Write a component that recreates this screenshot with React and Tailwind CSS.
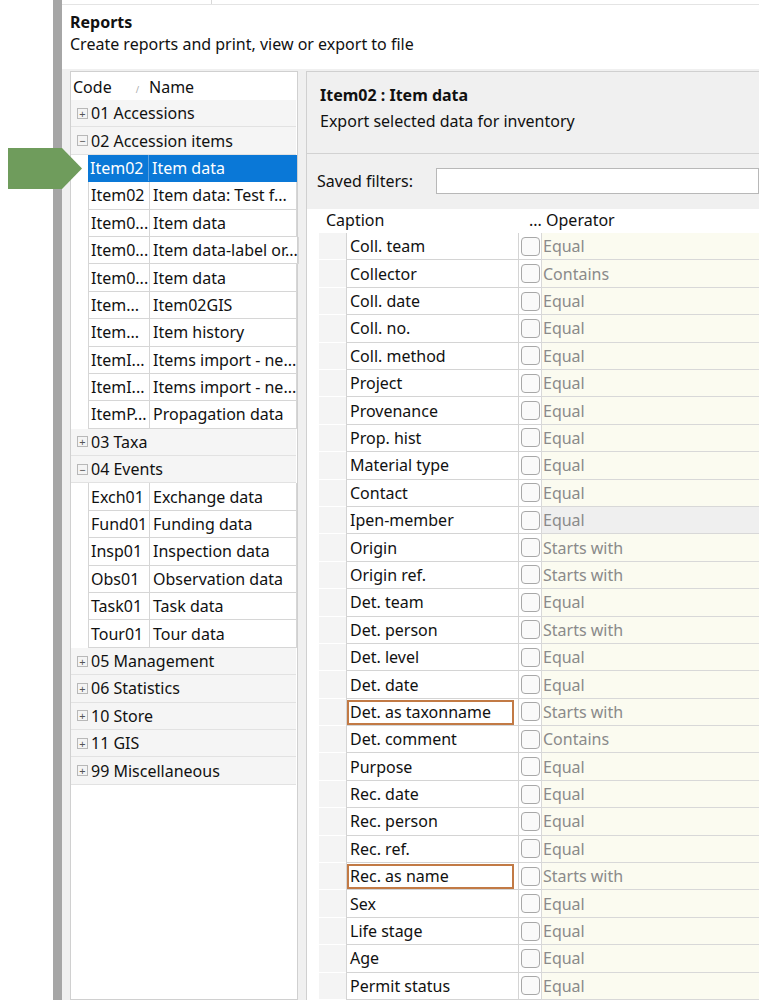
import React from 'react'

const tree = [
  { g: '01 Accessions', open: false },
  { g: '02 Accession items', open: true, items: [
    ['Item02', 'Item data', true],
    ['Item02', 'Item data: Test f...'],
    ['Item0...', 'Item data'],
    ['Item0...', 'Item data-label or...'],
    ['Item0...', 'Item data'],
    ['Item...', 'Item02GIS'],
    ['Item...', 'Item history'],
    ['ItemI...', 'Items import - ne...'],
    ['ItemI...', 'Items import - ne...'],
    ['ItemP...', 'Propagation data'],
  ] },
  { g: '03 Taxa', open: false },
  { g: '04 Events', open: true, items: [
    ['Exch01', 'Exchange data'],
    ['Fund01', 'Funding data'],
    ['Insp01', 'Inspection data'],
    ['Obs01', 'Observation data'],
    ['Task01', 'Task data'],
    ['Tour01', 'Tour data'],
  ] },
  { g: '05 Management' },
  { g: '06 Statistics' },
  { g: '10 Store' },
  { g: '11 GIS' },
  { g: '99 Miscellaneous' },
]

const fields = [
  ['Coll. team', 'Equal'], ['Collector', 'Contains'], ['Coll. date', 'Equal'], ['Coll. no.', 'Equal'],
  ['Coll. method', 'Equal'], ['Project', 'Equal'], ['Provenance', 'Equal'], ['Prop. hist', 'Equal'],
  ['Material type', 'Equal'], ['Contact', 'Equal'], ['Ipen-member', 'Equal', 'gray'], ['Origin', 'Starts with'],
  ['Origin ref.', 'Starts with'], ['Det. team', 'Equal'], ['Det. person', 'Starts with'], ['Det. level', 'Equal'],
  ['Det. date', 'Equal'], ['Det. as taxonname', 'Starts with', 'mark'], ['Det. comment', 'Contains'], ['Purpose', 'Equal'],
  ['Rec. date', 'Equal'], ['Rec. person', 'Equal'], ['Rec. ref.', 'Equal'], ['Rec. as name', 'Starts with', 'mark'],
  ['Sex', 'Equal'], ['Life stage', 'Equal'], ['Age', 'Equal'], ['Permit status', 'Equal'],
]

function Box({ open }) {
  return (
    <span className="w-[11px] h-[11px] border border-[#b8b8b8] bg-[#f4f4f4] flex items-center justify-center text-[#555] text-[11px] leading-none mr-[3px]">
      {open ? '−' : '+'}
    </span>
  )
}

export default function App() {
  return (
    <div className="relative w-[759px] h-[1000px] overflow-hidden bg-white text-[#111] text-[16px]" style={{ fontFamily: '"Noto Sans", "Open Sans", sans-serif' }}>
      {/* green arrow */}
      <svg className="absolute left-[8px] top-[148px]" width="74" height="41" viewBox="0 0 74 41">
        <polygon points="0,0 54,0 74,20.5 54,41 0,41" fill="#6f9c5c" />
      </svg>
      <div className="flex h-full">
        <div className="w-[53px] shrink-0" />
        <div className="w-[9px] shrink-0 bg-[#a6a6a6]" />
        <div className="flex-1 flex flex-col bg-[#f0f0f0]">
          <div className="h-[5px] bg-white border-b border-[#e4e4e4] flex">
            <div className="w-[150px] border-r border-[#d8d8d8]" />
          </div>
          <div className="bg-white pl-[8px] pt-[6px] pb-[14px] leading-[22px]">
            <div className="font-bold">Reports</div>
            <div>Create reports and print, view or export to file</div>
          </div>
          <div className="flex flex-1 pl-[8px] pt-[2px] gap-[8px] min-h-0">
            {/* left tree */}
            <div className="w-[228px] shrink-0 bg-white border border-[#d0d0d0] pt-[1px] leading-none">
              <div className="h-[27px] flex items-center">
                <span className="pl-[2px] w-[78px]">Code <span className="text-[9px] text-[#aaa] ml-[20px]">/</span></span>
                <span>Name</span>
              </div>
              {tree.map((n) => (
                <React.Fragment key={n.g}>
                  <div className="h-[27.4px] flex items-center pl-[6px] bg-[#f5f5f5] border-b border-[#e2e2e2] mr-[1px]">
                    <Box open={n.open} />
                    {n.g}
                  </div>
                  {n.items && n.items.map(([c, t, sel], i) => (
                    <div key={i} className="h-[27.4px] flex pl-[17px]">
                      <div className={`flex flex-1 border-b ${sel ? 'bg-[#0a78d7] text-white border-[#0a78d7]' : 'border-[#d6d6d6] border-l'} border-r`}>
                        <span className={`w-[61px] pl-[2px] flex items-center border-r ${sel ? 'border-[#5aa0e0]' : 'border-[#d6d6d6]'}`}>{c}</span>
                        <span className="pl-[3px] flex items-center whitespace-nowrap">{t}</span>
                      </div>
                    </div>
                  ))}
                </React.Fragment>
              ))}
            </div>
            {/* right panel */}
            <div className="flex-1 flex flex-col border-l border-t border-[#d0d0d0] min-w-0">
              <div className="h-[83px] border-b border-[#d2d2d2] pl-[13px] pt-[10px] leading-[26px]">
                <div className="font-bold">Item02 : Item data</div>
                <div>Export selected data for inventory</div>
              </div>
              <div className="h-[56px] flex items-center pl-[10px]">
                <span className="w-[119px]">Saved filters:</span>
                <div className="flex-1 h-[26px] bg-white border border-[#b8b8b8]" />
              </div>
              <div className="bg-white flex-1 pl-[12px]">
                <div className="h-[24px] flex items-end pb-[1px]">
                  <span className="w-[206px] pl-[7px]">Caption</span>
                  <span className="pl-[4px]">... Operator</span>
                </div>
                {fields.map(([c, o, k]) => (
                  <div key={c} className="h-[27.4px] flex">
                    <div className="w-[27px] bg-[#f4f4f4] border-b border-white" />
                    <div className="w-[173px] relative flex items-center pl-[3px] border-l border-r border-b border-[#d4d4d4] whitespace-nowrap">
                      {c}
                      {k === 'mark' && <div className="absolute left-[0px] top-[1px] w-[167px] h-[25px] border-2 border-[#c27a45]" />}
                    </div>
                    <div className="w-[22px] flex items-center justify-center border-b border-[#d4d4d4]">
                      <span className="w-[19px] h-[19px] border border-[#a8a8a8] rounded-[4px] bg-[#fafafa]" />
                    </div>
                    <div className={`flex-1 flex items-center pl-[1px] text-[#8a8a8a] border-b border-l border-[#d8d8d8] ${k === 'gray' ? 'bg-[#efefef]' : 'bg-[#fbfbf0]'}`}>{o}</div>
                  </div>
                ))}
              </div>
            </div>
          </div>
        </div>
      </div>
    </div>
  )
}
